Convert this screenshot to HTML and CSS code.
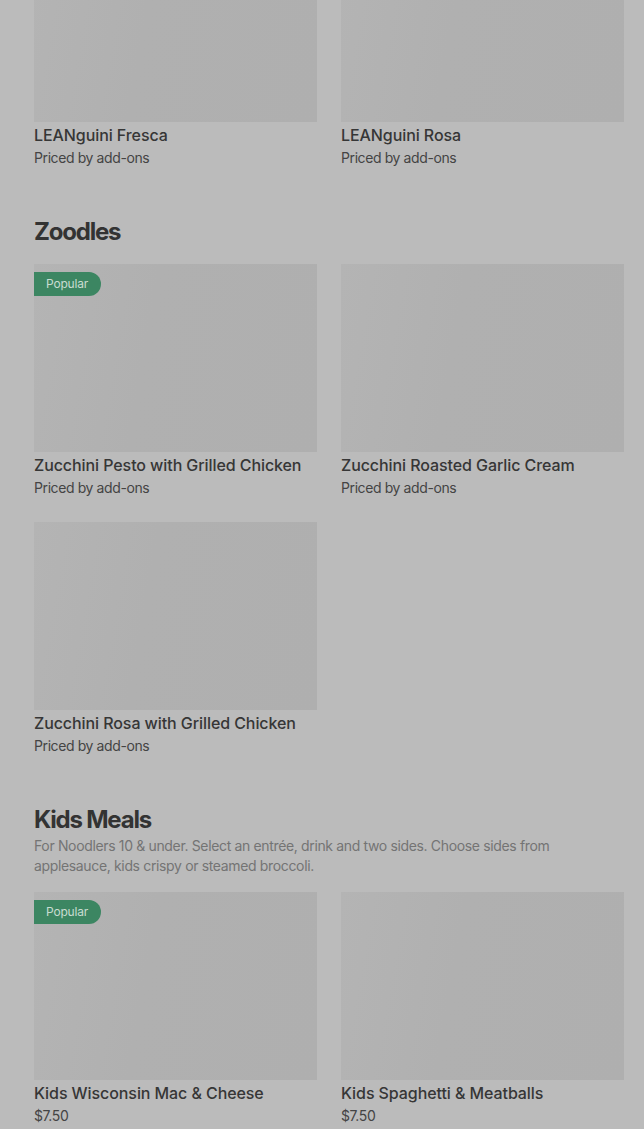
FILE: index.html
```html
<!DOCTYPE html>
<html lang="en">
<head>
<meta charset="utf-8">
<title>Menu</title>
<link rel="stylesheet" href="styles.css">
</head>
<body>
<main class="menu">
  <section class="section first">
    <div class="grid">
      <article class="card">
        <div class="thumb"></div>
        <h3 class="title">LEANguini Fresca</h3>
        <p class="price">Priced by add-ons</p>
      </article>
      <article class="card">
        <div class="thumb"></div>
        <h3 class="title">LEANguini Rosa</h3>
        <p class="price">Priced by add-ons</p>
      </article>
    </div>
  </section>

  <section class="section">
    <h2 class="heading">Zoodles</h2>
    <div class="grid">
      <article class="card">
        <div class="thumb"><span class="badge">Popular</span></div>
        <h3 class="title">Zucchini Pesto with Grilled Chicken</h3>
        <p class="price">Priced by add-ons</p>
      </article>
      <article class="card">
        <div class="thumb"></div>
        <h3 class="title">Zucchini Roasted Garlic Cream</h3>
        <p class="price">Priced by add-ons</p>
      </article>
      <article class="card">
        <div class="thumb"></div>
        <h3 class="title">Zucchini Rosa with Grilled Chicken</h3>
        <p class="price">Priced by add-ons</p>
      </article>
    </div>
  </section>

  <section class="section">
    <h2 class="heading">Kids Meals</h2>
    <p class="desc">For Noodlers 10 &amp; under. Select an entrée, drink and two sides. Choose sides from applesauce, kids crispy or steamed broccoli.</p>
    <div class="grid">
      <article class="card">
        <div class="thumb"><span class="badge">Popular</span></div>
        <h3 class="title">Kids Wisconsin Mac &amp; Cheese</h3>
        <p class="price">$7.50</p>
      </article>
      <article class="card">
        <div class="thumb"></div>
        <h3 class="title">Kids Spaghetti &amp; Meatballs</h3>
        <p class="price">$7.50</p>
      </article>
    </div>
  </section>
</main>
</body>
</html>
```

FILE: styles.css
```css
html, body {
  margin: 0;
  padding: 0;
  background: #bbbbbb;
  overflow: hidden;
}

body {
  font-family: Inter, Roboto, "Liberation Sans", sans-serif;
  color: #333333;
}

.menu {
  padding: 0 20px 0 34px;
  margin-top: -66px;
}

.section {
  display: flex;
  flex-direction: column;
  padding-top: 48px;
}

.section.first {
  padding-top: 0;
}

.heading {
  margin: 0;
  font-family: Inter, "Noto Sans", sans-serif;
  font-size: 24px;
  line-height: 32px;
  font-weight: 700;
  letter-spacing: -1.2px;
  color: #333333;
}

.desc {
  margin: 0;
  font-size: 14px;
  line-height: 20px;
  letter-spacing: -0.35px;
  color: #747474;
  max-width: 540px;
}

.grid {
  display: grid;
  grid-template-columns: 283px 283px;
  column-gap: 24px;
  row-gap: 24px;
  margin-top: 16px;
}

.section.first .grid {
  margin-top: 0;
}

.card {
  display: flex;
  flex-direction: column;
}

.thumb {
  position: relative;
  height: 188px;
  background: linear-gradient(100deg, #b4b4b4 0%, #b0b0b0 40%, #afafaf 100%);
}

.badge {
  position: absolute;
  left: 0;
  top: 8px;
  height: 24px;
  line-height: 24px;
  padding: 0 13px 0 12px;
  border-radius: 0 12px 12px 0;
  background: #3c8662;
  color: #c9dcd1;
  font-size: 12px;
  letter-spacing: -0.2px;
}

.title {
  margin: 3px 0 0;
  font-size: 16px;
  line-height: 20px;
  font-weight: 500;
  letter-spacing: -0.08px;
  color: #363636;
}

.price {
  margin: 3px 0 0;
  font-size: 14px;
  line-height: 20px;
  letter-spacing: -0.4px;
  color: #444444;
}
```
